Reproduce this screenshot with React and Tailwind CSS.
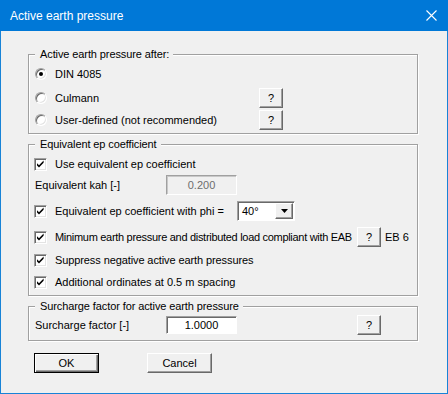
import React from "react";

const FONT = { fontFamily: '"Liberation Sans", Arial, sans-serif' };

function Radio({ checked }) {
  return (
    <div className="relative w-[12px] h-[12px] rounded-full bg-white border border-t-[#a0a0a0] border-l-[#a0a0a0] border-b-[#ffffff] border-r-[#ffffff] shadow-[inset_1px_1px_0_#696969,inset_-1px_-1px_0_#e3e3e3] flex items-center justify-center">
      {checked && <div className="w-[4px] h-[4px] rounded-full bg-black" />}
    </div>
  );
}

function Check() {
  return (
    <div className="w-[13px] h-[13px] bg-white border border-t-[#a0a0a0] border-l-[#a0a0a0] border-b-white border-r-white shadow-[inset_1px_1px_0_#696969,inset_-1px_-1px_0_#e3e3e3] flex items-center justify-center">
      <svg width="9" height="9" viewBox="0 0 9 9">
        <path d="M1 3.2 L3 5.2 L7.6 0.6 L7.6 2.8 L3 7.4 L1 5.4 Z" fill="#000" />
      </svg>
    </div>
  );
}

function HelpButton({ className = "" }) {
  return (
    <button className={`w-[24px] h-[20px] bg-[#f0f0f0] border border-t-white border-l-white border-b-[#696969] border-r-[#696969] shadow-[inset_-1px_-1px_0_#a0a0a0] text-[11px] leading-none flex items-center justify-center ${className}`}>
      ?
    </button>
  );
}

function Group({ title, className = "", children }) {
  return (
    <div className={`relative w-[390px] ml-[27px] border border-[#a0a0a0] shadow-[inset_1px_1px_0_#fff,1px_1px_0_#fff] ${className}`}>
      <span className="absolute left-[6px] -top-[8px] bg-[#f0f0f0] pl-[5px] pr-[4px] leading-[14px] tracking-[-0.1px]">
        {title}
      </span>
      {children}
    </div>
  );
}

function CheckRow({ label, className = "", labelClass = "", width, children }) {
  return (
    <div className={`h-[20px] flex items-center pl-[5px] ${className}`}>
      <div className="flex items-center gap-[8px] shrink-0" style={width ? { width } : undefined}>
        <Check />
        <span className={`whitespace-nowrap ${labelClass}`}>{label}</span>
      </div>
      {children}
    </div>
  );
}

export default function App() {
  return (
    <div
      className="w-[448px] h-[394px] flex flex-col bg-[#f0f0f0] border-x border-b border-[#1883d7] text-[11px] text-black"
      style={FONT}
    >
      <div className="h-[31px] -mx-[1px] bg-[#0078d7] flex items-center justify-between pl-[10px] pr-[11px] shrink-0">
        <span className="text-white text-[12px]">Active earth pressure</span>
        <svg width="11" height="11" viewBox="0 0 11 11">
          <path d="M0.5 0.5 L10.5 10.5 M10.5 0.5 L0.5 10.5" stroke="#fff" strokeWidth="1.1" />
        </svg>
      </div>

      <Group title="Active earth pressure after:" className="mt-[23px] pt-[9px] pb-[3px]">
        <div className="h-[20px] flex items-center pl-[6px] gap-[8px]">
          <Radio checked />
          <span>DIN 4085</span>
        </div>
        <div className="h-[20px] mt-[4px] flex items-center pl-[6px]">
          <div className="w-[224px] flex items-center gap-[8px]">
            <Radio />
            <span>Culmann</span>
          </div>
          <HelpButton />
        </div>
        <div className="h-[20px] mt-[2px] flex items-center pl-[6px]">
          <div className="w-[224px] flex items-center gap-[8px]">
            <Radio />
            <span>User-defined (not recommended)</span>
          </div>
          <HelpButton />
        </div>
      </Group>

      <Group title="Equivalent ep coefficient" className="mt-[10px] pt-[9px] pb-[3px]">
        <CheckRow label="Use equivalent ep coefficient" />
        <div className="h-[20px] mt-[1px] flex items-center pl-[6px]">
          <span className="w-[131px]">Equivalent kah [-]</span>
          <div className="w-[71px] h-[20px] border border-t-[#a0a0a0] border-l-[#a0a0a0] border-b-white border-r-white shadow-[inset_1px_1px_0_#c8c8c8] flex items-center justify-center text-[#6d6d6d]">
            0.200
          </div>
        </div>
        <CheckRow label="Equivalent ep coefficient with phi =" className="mt-[6px]" width="203px">
          <div className="w-[58px] h-[20px] bg-white border border-t-[#a0a0a0] border-l-[#a0a0a0] border-b-white border-r-white shadow-[inset_1px_1px_0_#696969] flex items-center justify-between pl-[4px] pr-[1px]">
            <span>40°</span>
            <div className="w-[18px] h-[16px] bg-[#f0f0f0] border border-t-white border-l-white border-b-[#696969] border-r-[#696969] shadow-[inset_-1px_-1px_0_#a0a0a0] flex items-center justify-center">
              <svg width="7" height="4" viewBox="0 0 7 4">
                <path d="M0 0 L7 0 L3.5 4 Z" fill="#000" />
              </svg>
            </div>
          </div>
        </CheckRow>
        <CheckRow
          label="Minimum earth pressure and distributed load compliant with EAB"
          labelClass="tracking-[-0.3px]"
          className="mt-[6px]"
          width="323px"
        >
          <HelpButton />
          <span className="ml-[4px]">EB 6</span>
        </CheckRow>
        <CheckRow label="Suppress negative active earth pressures" labelClass="tracking-[-0.1px]" className="mt-[3px]" />
        <CheckRow label="Additional ordinates at 0.5 m spacing" className="mt-[2px]" />
      </Group>

      <Group title="Surcharge factor for active earth pressure" className="mt-[10px] pt-[8px] pb-[5px]">
        <div className="h-[20px] flex items-center pl-[6px]">
          <span className="w-[131px]">Surcharge factor [-]</span>
          <div className="w-[71px] h-[18px] bg-white border border-t-[#a0a0a0] border-l-[#a0a0a0] border-b-white border-r-white shadow-[inset_1px_1px_0_#696969] flex items-center justify-center">
            1.0000
          </div>
          <HelpButton className="ml-[120px]" />
        </div>
      </Group>

      <div className="mt-[12px] ml-[33px] flex gap-[48px]">
        <button className="w-[65px] h-[20px] bg-[#f0f0f0] border border-black shadow-[inset_1px_1px_0_#fff,inset_-1px_-1px_0_#696969,inset_-2px_-2px_0_#a0a0a0] text-[11px]">
          OK
        </button>
        <button className="w-[65px] h-[20px] bg-[#f0f0f0] border border-t-white border-l-white border-b-[#696969] border-r-[#696969] shadow-[inset_-1px_-1px_0_#a0a0a0] text-[11px]">
          Cancel
        </button>
      </div>
    </div>
  );
}
